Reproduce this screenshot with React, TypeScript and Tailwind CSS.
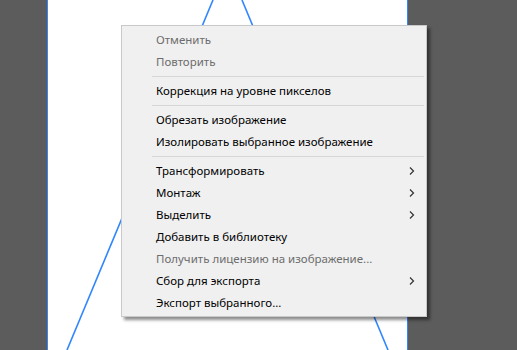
import React from "react";

type Item = { label: string; disabled?: boolean; submenu?: boolean } | "sep";

const items: Item[] = [
  { label: "Отменить", disabled: true },
  { label: "Повторить", disabled: true },
  "sep",
  { label: "Коррекция на уровне пикселов" },
  "sep",
  { label: "Обрезать изображение" },
  { label: "Изолировать выбранное изображение" },
  "sep",
  { label: "Трансформировать", submenu: true },
  { label: "Монтаж", submenu: true },
  { label: "Выделить", submenu: true },
  { label: "Добавить в библиотеку" },
  { label: "Получить лицензию на изображение...", disabled: true },
  { label: "Сбор для экспорта", submenu: true },
  { label: "Экспорт выбранного..." },
];

function Chevron() {
  return (
    <svg width="6" height="8" viewBox="0 0 6 8" className="mr-[11px]" aria-hidden="true">
      <polyline points="1,0.5 4.5,4 1,7.5" fill="none" stroke="#333" strokeWidth="1.2" />
    </svg>
  );
}

export default function App() {
  return (
    <div className="relative h-[350px] w-[517px] overflow-hidden bg-[#5c5c5c]" style={{ fontFamily: '"Noto Sans", "Open Sans", sans-serif' }}>
      {/* artboard */}
      <div className="ml-[47px] h-full w-[361px] border-x border-[#2f86ff] bg-white">
        <svg width="361" height="350" viewBox="47 0 361 350" aria-hidden="true">
          <line x1="212" y1="0" x2="66" y2="350" stroke="#2f86ff" strokeWidth="1.6" />
          <line x1="241" y1="0" x2="387" y2="350" stroke="#2f86ff" strokeWidth="1.6" />
        </svg>
      </div>

      {/* context menu */}
      <div className="absolute left-[121px] top-[25px] w-[306px] border border-[#c9c9c9] bg-[#f0f0f0] pb-[2px] pt-[3px] text-[11.5px] shadow-[3px_3px_3px_rgba(0,0,0,0.45)]">
        {items.map((it, i) =>
          it === "sep" ? (
            <div key={i} className="my-[3px] ml-[30px] mr-[2px] h-px bg-[#d7d7d7]" />
          ) : (
            <div
              key={i}
              className={`flex h-[22px] items-center justify-between pl-[34px] ${it.disabled ? "text-[#6d6d6d]" : "text-[#000]"}`}
            >
              <span>{it.label}</span>
              {it.submenu && <Chevron />}
            </div>
          )
        )}
      </div>
    </div>
  );
}
